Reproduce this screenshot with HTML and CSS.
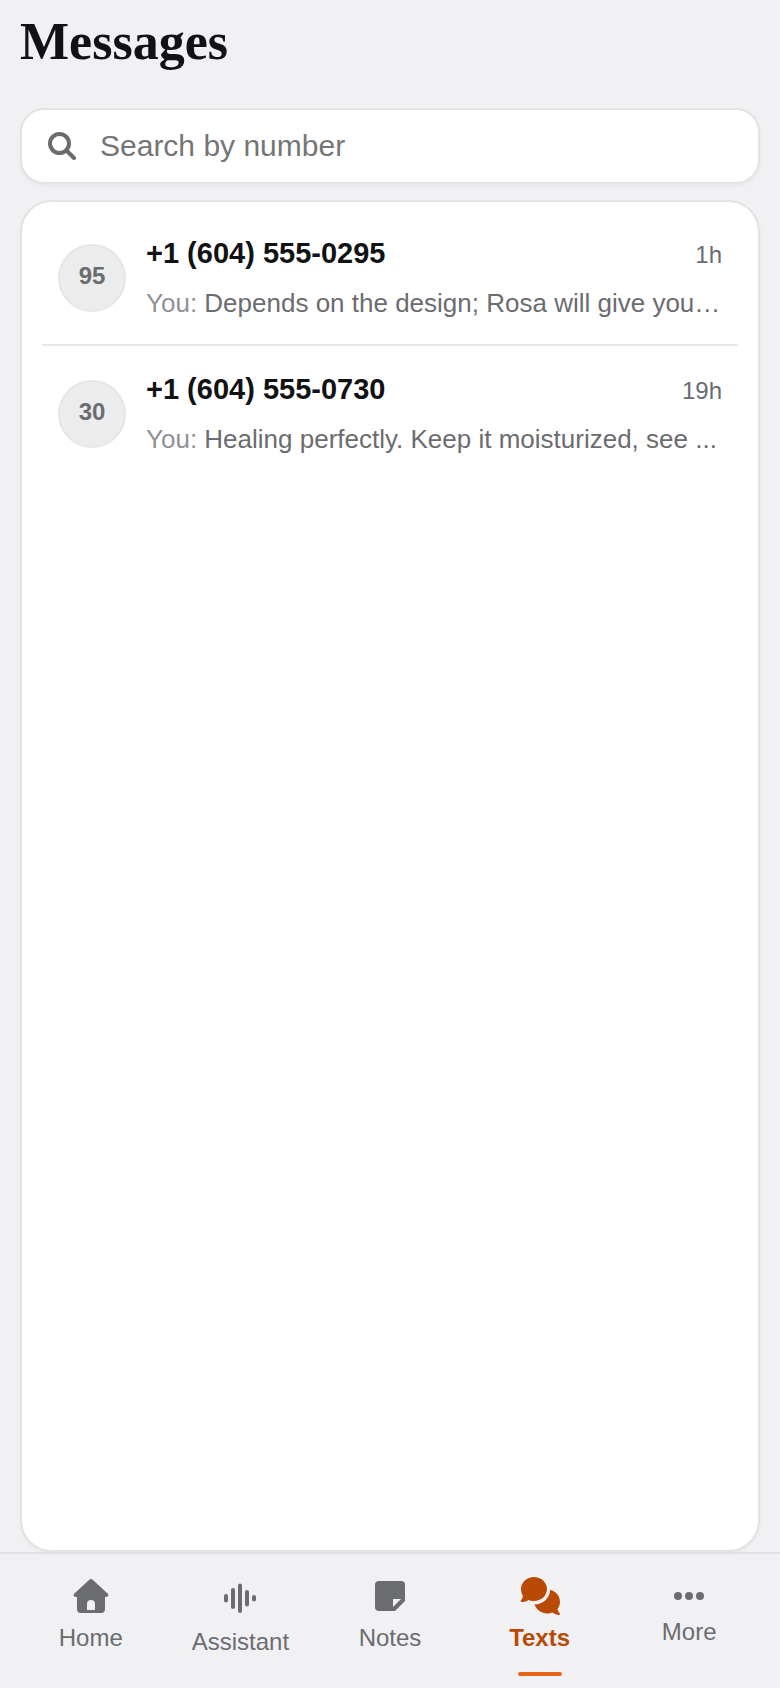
FILE: index.html
```
<!DOCTYPE html>
<html lang="en">
  <head>
    <meta charset="UTF-8">
    <meta name="viewport" content="width=device-width, initial-scale=1">
    <title>Messages</title>
    <link rel="stylesheet" href="styles.css">
  </head>
  <body>
    <main class="page">
      <h1 class="title">Messages</h1>

      <label class="search">
        <svg class="search-icon" viewBox="0 0 28 28" aria-hidden="true">
          <circle cx="11.5" cy="11.5" r="9.5"/>
          <path d="M18.5 18.5L26 26"/>
        </svg>
        <input class="search-input" type="search" placeholder="Search by number" aria-label="Search by number">
      </label>

      <ul class="threads">
        <li>
          <a class="thread" href="#">
            <span class="avatar">95</span>
            <span class="thread-body">
              <span class="thread-top">
                <span class="number">+1 (604) 555-0295</span>
                <span class="time">1h</span>
              </span>
              <span class="preview"><span class="you">You:</span> Depends on the design; Rosa will give you ...</span>
            </span>
          </a>
        </li>
        <li>
          <a class="thread" href="#">
            <span class="avatar">30</span>
            <span class="thread-body">
              <span class="thread-top">
                <span class="number">+1 (604) 555-0730</span>
                <span class="time">19h</span>
              </span>
              <span class="preview"><span class="you">You:</span> Healing perfectly. Keep it moisturized, see ...</span>
            </span>
          </a>
        </li>
      </ul>
    </main>

    <nav class="tabs">
      <a class="tab" href="#">
        <svg class="icon" viewBox="0 0 36 36" aria-hidden="true">
          <path fill-rule="evenodd" d="M16.6 1.6a2 2 0 0 1 2.8 0L34.6 15.6C36 17 35.2 19 33.4 19H32V31a4 4 0 0 1-4 4H8a4 4 0 0 1-4-4V19H2.600C.8 19 0 17 1.400 15.600ZM14 32h8V26a4 4 0 0 0-8 0Z"/>
        </svg>
        <span class="tab-label">Home</span>
      </a>
      <a class="tab" href="#">
        <svg class="icon icon-wave" viewBox="0 0 44 44" aria-hidden="true">
          <path d="M8 22v4.500M15 16v17M22 11.500v25.500M29 18v12.500M36 23v2.500"/>
        </svg>
        <span class="tab-label">Assistant</span>
      </a>
      <a class="tab" href="#">
        <svg class="icon" viewBox="0 0 36 36" aria-hidden="true">
          <path d="M7 3H29a4 4 0 0 1 4 4V23L23 33H7a4 4 0 0 1-4-4V7a4 4 0 0 1 4-4Z"/>
          <path class="fold" d="M21 21H29L21 29Z"/>
        </svg>
        <span class="tab-label">Notes</span>
      </a>
      <a class="tab active" href="#" aria-current="page">
        <svg class="icon icon-chat" viewBox="0 0 40 40" aria-hidden="true">
          <path d="M14 1C21 1 27 6 27 13S21 25 14 25C12 25 10 24.600 8.500 24C6.500 25.500 4 26 1.500 26C.6 26 .4 25 1 24.300C2 23 2.800 21.500 3 20C1.700 18 1 15.500 1 13C1 6 7 1 14 1Z"/>
          <path d="M30 14C36 15 40 20 40 26C40 28.500 39 31 37.500 33C37.800 34.500 38.500 36 39.500 37C40.200 38 40 39 39 39C36.500 39 34.500 38 32.500 36.500C31 37 29 37.500 27 37.500C21.500 37.500 16.500 34 14.500 28.500C23 28.500 30 22 30 14Z"/>
        </svg>
        <span class="tab-label">Texts</span>
      </a>
      <a class="tab" href="#">
        <svg class="icon icon-more" viewBox="0 0 36 24" aria-hidden="true">
          <circle cx="7" cy="12" r="4"/>
          <circle cx="18" cy="12" r="4"/>
          <circle cx="29" cy="12" r="4"/>
        </svg>
        <span class="tab-label">More</span>
      </a>
    </nav>
  </body>
</html>
```
FILE: styles.css
```
* {
  box-sizing: border-box;
}
body {
  margin: 0;
  min-height: 100vh;
  display: flex;
  flex-direction: column;

  background-color: #f1f1f3;
  color: #111214;
  font-family: "Liberation Sans", Arial, sans-serif;
}
a {
  color: inherit;
  text-decoration: none;
}
.page {
  flex: 1;
  display: flex;
  flex-direction: column;
  gap: 16px;
  padding: 12px 20px 0;
}
.title {
  margin: 0 0 20px;
  font-family: "Liberation Serif", "Times New Roman", serif;
  font-size: 52px;
  line-height: 60px;
  font-weight: 600;
}

/* search */
.search {
  display: flex;
  align-items: center;
  gap: 24px;
  height: 76px;
  padding: 0 26px;

  background-color: #fff;
  border: 2px solid #e3e3e5;
  border-radius: 24px;
  box-shadow: 0 2px 4px rgba(0, 0, 0, 0.04);
}
.search-icon {
  width: 28px;
  height: 28px;
  flex: none;
  fill: none;
  stroke: #6b6c70;
  stroke-width: 4;
  stroke-linecap: round;
}
.search-input {
  flex: 1;
  min-width: 0;
  padding: 0;
  border: none;
  outline: none;
  background: none;
  font-family: inherit;
  font-size: 30px;
}
.search-input::placeholder {
  color: #757575;
}

/* conversation list */
.threads {
  flex: 1;
  margin: 0;
  padding: 8px 20px;
  list-style: none;

  background-color: #fff;
  border: 2px solid #e3e3e5;
  border-radius: 32px;
  box-shadow: 0 2px 4px rgba(0, 0, 0, 0.04);
}
.threads li + li {
  border-top: 2px solid #e8e8ea;
}
.thread {
  display: flex;
  align-items: center;
  gap: 20px;
  padding: 24px 16px 22px;
}
.avatar {
  width: 68px;
  height: 68px;
  flex: none;

  background-color: #ececec;
  border: 2px solid #e6e6e7;
  border-radius: 50%;

  color: #6b6c70;
  font-size: 24px;
  font-weight: 600;
  line-height: 60px;
  text-align: center;
}
.thread-body {
  flex: 1;
  min-width: 0;
  display: flex;
  flex-direction: column;
  gap: 12px;
}
.thread-top {
  display: flex;
  justify-content: space-between;
  align-items: baseline;
}
.number {
  font-size: 29px;
  font-weight: 600;
  line-height: 38px;
}
.time {
  color: #6b6c70;
  font-size: 24px;
}
.preview {
  overflow: hidden;
  white-space: nowrap;
  text-overflow: ellipsis;

  color: #6b6c70;
  font-size: 26px;
  line-height: 38px;
}
.you {
  color: #919297;
}

/* bottom tabs */
.tabs {
  display: grid;
  grid-template-columns: repeat(5, 1fr);
  padding: 0 16px 12px;
  border-top: 2px solid #e0e0e2;
  color: #6b6c70;
}
.tab {
  position: relative;
  height: 122px;
  display: flex;
  flex-direction: column;
  align-items: center;
  justify-content: center;
  gap: 10px;
}
.tab-label {
  font-size: 24px;
  line-height: 28px;
}
.icon {
  width: 36px;
  height: 36px;
  fill: currentColor;
}
.icon .fold {
  fill: #f1f1f3;
}
.icon-wave {
  width: 44px;
  height: 44px;
  fill: none;
  stroke: currentColor;
  stroke-width: 4;
  stroke-linecap: round;
}
.icon-chat {
  width: 40px;
  height: 40px;
  margin: -2px 0;
}
.icon-more {
  height: 24px;
}
.active {
  color: #b94a06;
  font-weight: 600;
}
.active::after {
  content: "";
  position: absolute;
  bottom: 0;
  width: 44px;
  height: 4px;
  border-radius: 2px;
  background-color: #e5641a;
}
```
